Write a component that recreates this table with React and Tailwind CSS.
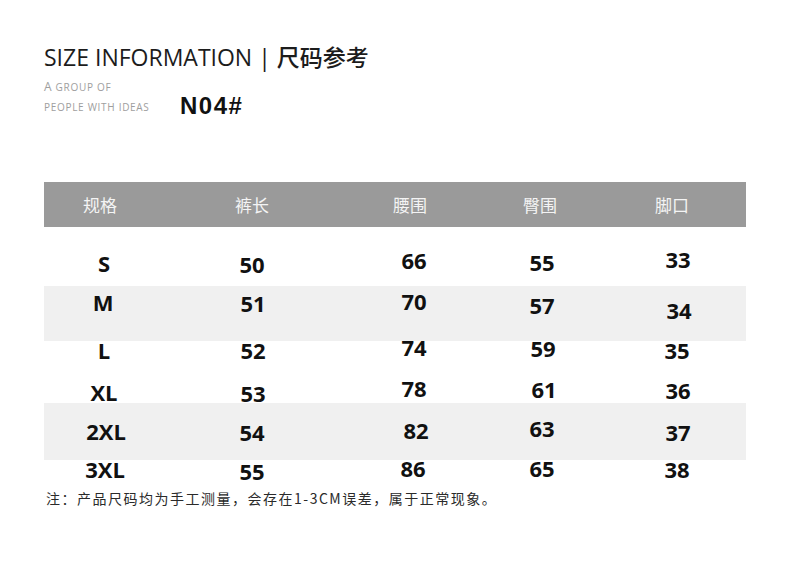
import React from "react";

const headers = [
  { t: "规格", c: "-translate-x-[4px]" },
  { t: "裤长", c: "" },
  { t: "腰围", c: "-translate-x-[4px]" },
  { t: "臀围", c: "-translate-x-[2px]" },
  { t: "脚口", c: "-translate-x-[6px]" },
];

const rows = {
  S: [
    { t: "S", c: "" },
    { t: "50", c: "translate-y-[1px]" },
    { t: "66", c: "-translate-y-[3px]" },
    { t: "55", c: "-translate-y-[1px]" },
    { t: "33", c: "-translate-y-[4px]" },
  ],
  M: [
    { t: "M", c: "-translate-x-[1px]" },
    { t: "51", c: "translate-x-[1px] translate-y-[1px]" },
    { t: "70", c: "-translate-y-[1px]" },
    { t: "57", c: "translate-y-[3px]" },
    { t: "34", c: "translate-x-[1px] translate-y-[8px]" },
  ],
  L: [
    { t: "L", c: "" },
    { t: "52", c: "translate-x-[1px]" },
    { t: "74", c: "-translate-y-[3px]" },
    { t: "59", c: "translate-x-[1px] -translate-y-[2px]" },
    { t: "35", c: "-translate-x-[1px]" },
  ],
  XL: [
    { t: "XL", c: "" },
    { t: "53", c: "translate-x-[1px] translate-y-[1px]" },
    { t: "78", c: "-translate-y-[4px]" },
    { t: "61", c: "translate-x-[2px] -translate-y-[3px]" },
    { t: "36", c: "-translate-y-[2px]" },
  ],
  XXL: [
    { t: "2XL", c: "translate-x-[2px]" },
    { t: "54", c: "translate-y-[1px]" },
    { t: "82", c: "translate-x-[2px] -translate-y-[1px]" },
    { t: "63", c: "-translate-y-[3px]" },
    { t: "37", c: "translate-y-[1px]" },
  ],
  XXXL: [
    { t: "3XL", c: "translate-x-[1px]" },
    { t: "55", c: "translate-y-[2px]" },
    { t: "86", c: "-translate-x-[1px] -translate-y-[1px]" },
    { t: "65", c: "-translate-y-[1px]" },
    { t: "38", c: "-translate-x-[1px]" },
  ],
};

const cols = "grid grid-cols-[120px_176px_148px_108px_164px]";

function Row({ cells, className = "" }) {
  return (
    <div
      className={`${cols} h-[24px] text-[22px] leading-[24px] font-bold text-[#111] ${className}`}
      style={{ fontFamily: '"Open Sans", "Noto Sans", sans-serif' }}
    >
      {cells.map((c, i) => (
        <div key={i} className={`text-center ${c.c}`}>
          {c.t}
        </div>
      ))}
    </div>
  );
}

export default function App() {
  return (
    <div
      className="w-[790px] h-[562px] bg-white overflow-hidden pl-[44px] pt-[42px]"
      style={{ fontFamily: '"Open Sans", "Noto Sans CJK SC", sans-serif' }}
    >
      <h1
        className="text-[23px] leading-[30px] font-medium text-[#1c1c1c] whitespace-nowrap"
        style={{ fontFamily: '"Open Sans", "Noto Sans CJK SC", sans-serif' }}
      >
        SIZE INFORMATION | <span className="tracking-[0px]">尺码参考</span>
      </h1>

      <div className="flex mt-[5px]">
        <div className="w-[136px] text-[#9e9e9e] text-[10px] leading-[20px] tracking-[0.7px] whitespace-nowrap">
          <div>
            <span className="text-[12px]">A</span> GROUP OF
          </div>
          <div>PEOPLE WITH IDEAS</div>
        </div>
        <div
          className="mt-[15px] text-[24px] leading-[28px] font-bold tracking-[1.5px] text-[#111]"
          style={{ fontFamily: '"Liberation Sans", Arial, sans-serif' }}
        >
          N04#
        </div>
      </div>

      <div className="w-[702px] mt-[62px]">
        <div
          className={`${cols} h-[45px] items-center bg-[#9a9a9a] text-[#f4f4f4] text-[17px]`}
          style={{ fontFamily: '"Noto Sans CJK SC", sans-serif' }}
        >
          {headers.map((h, i) => (
            <div key={i} className={`text-center ${h.c}`}>
              {h.t}
            </div>
          ))}
        </div>

        <Row cells={rows.S} className="mt-[24px]" />

        <div className="mt-[11px] h-[55px] bg-[#f0f0f0] pt-[4px]">
          <Row cells={rows.M} />
        </div>

        <Row cells={rows.L} className="-mt-[3px] relative" />
        <Row cells={rows.XL} className="mt-[18px]" />

        <div className="-mt-[1px] h-[57px] bg-[#f0f0f0] pt-[16px]">
          <Row cells={rows.XXL} />
        </div>

        <Row cells={rows.XXXL} className="-mt-[3px] relative" />
      </div>

      <p
        className="mt-[7px] ml-[2px] text-[14px] leading-[20px] tracking-[1.5px] text-[#2a2a2a] whitespace-nowrap"
        style={{ fontFamily: '"Noto Sans CJK SC", sans-serif' }}
      >
        注：产品尺码均为手工测量，会存在1-3CM误差，属于正常现象。
      </p>
    </div>
  );
}
